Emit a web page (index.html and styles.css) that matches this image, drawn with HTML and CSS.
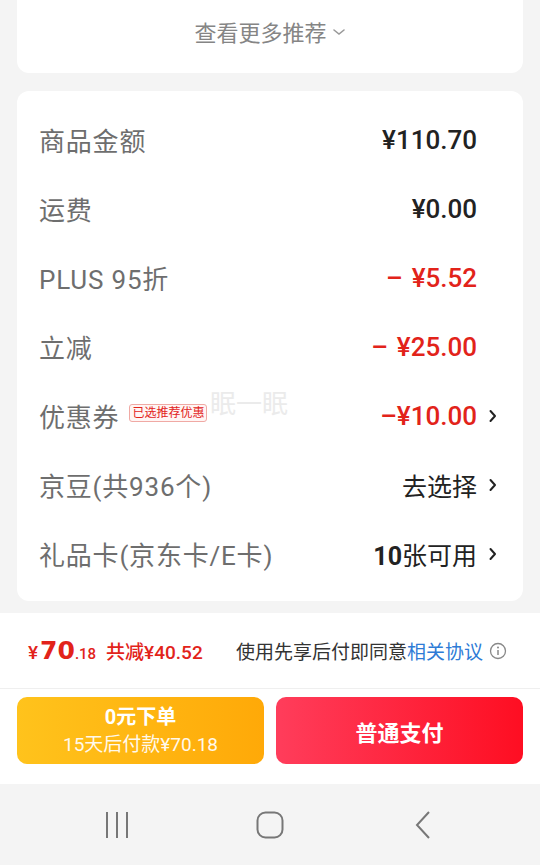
FILE: index.html
```
<!DOCTYPE html>
<html lang="zh-CN">
<head>
    <meta charset="UTF-8">
    <meta name="viewport" content="width=device-width, initial-scale=1.0">
    <title>确认订单</title>
    <link rel="stylesheet" href="styles.css">
</head>
<body>
    <div class="page">
        <div class="card more-card">
            <span class="more">查看更多推荐</span>
            <svg class="more-icon" width="14" height="8" viewBox="0 0 14 8"><path d="M2 2 L7 6 L12 2" fill="none" stroke="#999" stroke-width="1.6" stroke-linecap="round"/></svg>
        </div>

        <div class="card price-card">
            <div class="row">
                <span class="label">商品金额</span>
                <span class="val bold">¥110.70</span>
                <span class="arrow"></span>
            </div>
            <div class="row">
                <span class="label">运费</span>
                <span class="val bold">¥0.00</span>
                <span class="arrow"></span>
            </div>
            <div class="row">
                <span class="label">PLUS 95折</span>
                <span class="val bold red"><span class="minus">–</span>¥5.52</span>
                <span class="arrow"></span>
            </div>
            <div class="row">
                <span class="label">立减</span>
                <span class="val bold red"><span class="minus">–</span>¥25.00</span>
                <span class="arrow"></span>
            </div>
            <div class="row">
                <span class="label short">优惠券</span>
                <span class="tag">已选推荐优惠</span>
                <span class="val bold red">–¥10.00</span>
                <span class="arrow"><svg width="8" height="14" viewBox="0 0 8 14"><path d="M1.5 2 L6 7 L1.5 12" fill="none" stroke="#222" stroke-width="2" stroke-linecap="round" stroke-linejoin="round"/></svg></span>
            </div>
            <div class="row">
                <span class="label">京豆(共936个)</span>
                <span class="val">去选择</span>
                <span class="arrow"><svg width="8" height="14" viewBox="0 0 8 14"><path d="M1.5 2 L6 7 L1.5 12" fill="none" stroke="#222" stroke-width="2" stroke-linecap="round" stroke-linejoin="round"/></svg></span>
            </div>
            <div class="row">
                <span class="label">礼品卡(京东卡/E卡)</span>
                <span class="val"><b>10</b>张可用</span>
                <span class="arrow"><svg width="8" height="14" viewBox="0 0 8 14"><path d="M1.5 2 L6 7 L1.5 12" fill="none" stroke="#222" stroke-width="2" stroke-linecap="round" stroke-linejoin="round"/></svg></span>
            </div>
            <div class="watermark">眠一眠</div>
        </div>

        <div class="pay-bar">
            <div class="summary">
                <div class="total">
                    <span class="yen">¥</span><span class="big">70</span><span class="cents">.18</span>
                    <span class="saved">共减¥40.52</span>
                </div>
                <div class="agree">
                    使用先享后付即同意<span class="link">相关协议</span>
                    <svg class="info" width="18" height="18" viewBox="0 0 18 18"><circle cx="9" cy="9" r="7.5" fill="none" stroke="#888" stroke-width="1.3"/><circle cx="9" cy="5.6" r="1" fill="#888"/><path d="M9 8 V13" stroke="#888" stroke-width="1.5"/></svg>
                </div>
            </div>
            <div class="buttons">
                <div class="btn btn-later">
                    <span class="btn-title">0元下单</span>
                    <span class="btn-sub">15天后付款¥70.18</span>
                </div>
                <div class="btn btn-pay">
                    <span class="btn-main">普通支付</span>
                </div>
            </div>
        </div>

        <div class="navbar">
            <svg width="26" height="28" viewBox="0 0 26 28"><path d="M3 1 V27 M13 1 V27 M23 1 V27" stroke="#777" stroke-width="2"/></svg>
            <svg width="28" height="28" viewBox="0 0 28 28"><rect x="1.5" y="1.5" width="25" height="25" rx="8" fill="none" stroke="#777" stroke-width="2"/></svg>
            <svg width="20" height="30" viewBox="0 0 20 30"><path d="M16 2 L4 15 L16 28" fill="none" stroke="#777" stroke-width="2"/></svg>
        </div>
    </div>
</body>
</html>
```

FILE: styles.css
```
html, body {
    margin: 0;
    padding: 0;
}
body {
    font-family: Roboto, "Noto Sans CJK SC", sans-serif;
    background-color: #f4f4f4;
    color: #222;
    width: 540px;
    height: 865px;
    overflow: hidden;
}
.page {
    display: flex;
    flex-direction: column;
    height: 865px;
}
.card {
    background-color: #fff;
    margin: 0 17px;
    border-radius: 12px;
}
.more-card {
    height: 73px;
    border-radius: 0 0 12px 12px;
    display: flex;
    justify-content: center;
    align-items: center;
    gap: 5px;
    padding-bottom: 11px;
    box-sizing: border-box;
}
.more {
    font-size: 22px;
    color: #858585;
}
.more-icon {
    margin-top: 2px;
}
.price-card {
    margin-top: 18px;
    padding: 14px 14px 13px 22px;
    position: relative;
}
.row {
    height: 69px;
    display: flex;
    align-items: center;
}
.label {
    font-size: 26px;
    letter-spacing: 0.8px;
    color: #6e6e6e;
    flex: 1;
    white-space: nowrap;
}
.label.short {
    flex: none;
}
.tag {
    font-size: 12px;
    color: #e2231a;
    border: 1px solid #f0a9a4;
    background-color: #fff5f4;
    border-radius: 3px;
    padding: 0 2px;
    line-height: 16px;
    margin-left: 10px;
    margin-top: -6px;
    white-space: nowrap;
    margin-right: auto;
}
.val {
    font-size: 25px;
    color: #222;
    white-space: nowrap;
}
.val b {
    font-weight: 700;
}
.bold {
    font-weight: 500;
    font-size: 26px;
}
.red {
    color: #e2231a;
}
.minus {
    margin-right: 9px;
}
.arrow {
    width: 20px;
    margin-left: 12px;
    display: flex;
    align-items: center;
}
.watermark {
    position: absolute;
    left: 193px;
    top: 292px;
    font-size: 26px;
    color: #ebebeb;
    pointer-events: none;
}
.pay-bar {
    margin-top: 12px;
    background-color: #fff;
}
.summary {
    height: 75px;
    display: flex;
    align-items: center;
    justify-content: space-between;
    padding: 0 33px 0 28px;
    border-bottom: 1px solid #efefef;
}
.total {
    color: #e2231a;
    white-space: nowrap;
    display: flex;
    align-items: baseline;
}
.yen {
    font-size: 19px;
    font-weight: 500;
    margin-right: 2px;
}
.big {
    font-family: "DejaVu Sans", sans-serif;
    font-size: 25px;
    font-weight: 700;
}
.cents {
    font-size: 15px;
    font-weight: 500;
}
.saved {
    font-size: 19px;
    font-weight: 500;
    margin-left: 10px;
}
.agree {
    font-size: 19px;
    color: #333;
    display: flex;
    align-items: center;
    white-space: nowrap;
}
.link {
    color: #2e7bd6;
}
.info {
    margin-left: 6px;
}
.buttons {
    display: flex;
    gap: 12px;
    padding: 8px 17px 20px;
}
.btn {
    flex: 1;
    height: 67px;
    border-radius: 10px;
    color: #fff;
    display: flex;
    flex-direction: column;
    align-items: center;
    justify-content: center;
}
.btn-later {
    background: linear-gradient(90deg, #ffc31c, #ffa908);
}
.btn-pay {
    background: linear-gradient(90deg, #ff3d5b, #fe0e22);
}
.btn-title {
    font-size: 20px;
    font-weight: 700;
    line-height: 28px;
}
.btn-sub {
    font-size: 19px;
    line-height: 28px;
    opacity: 0.92;
}
.btn-main {
    font-size: 22px;
    font-weight: 700;
}
.navbar {
    flex: 1;
    display: grid;
    grid-template-columns: repeat(3, 153px);
    justify-content: center;
    justify-items: center;
    align-items: center;
}
```
